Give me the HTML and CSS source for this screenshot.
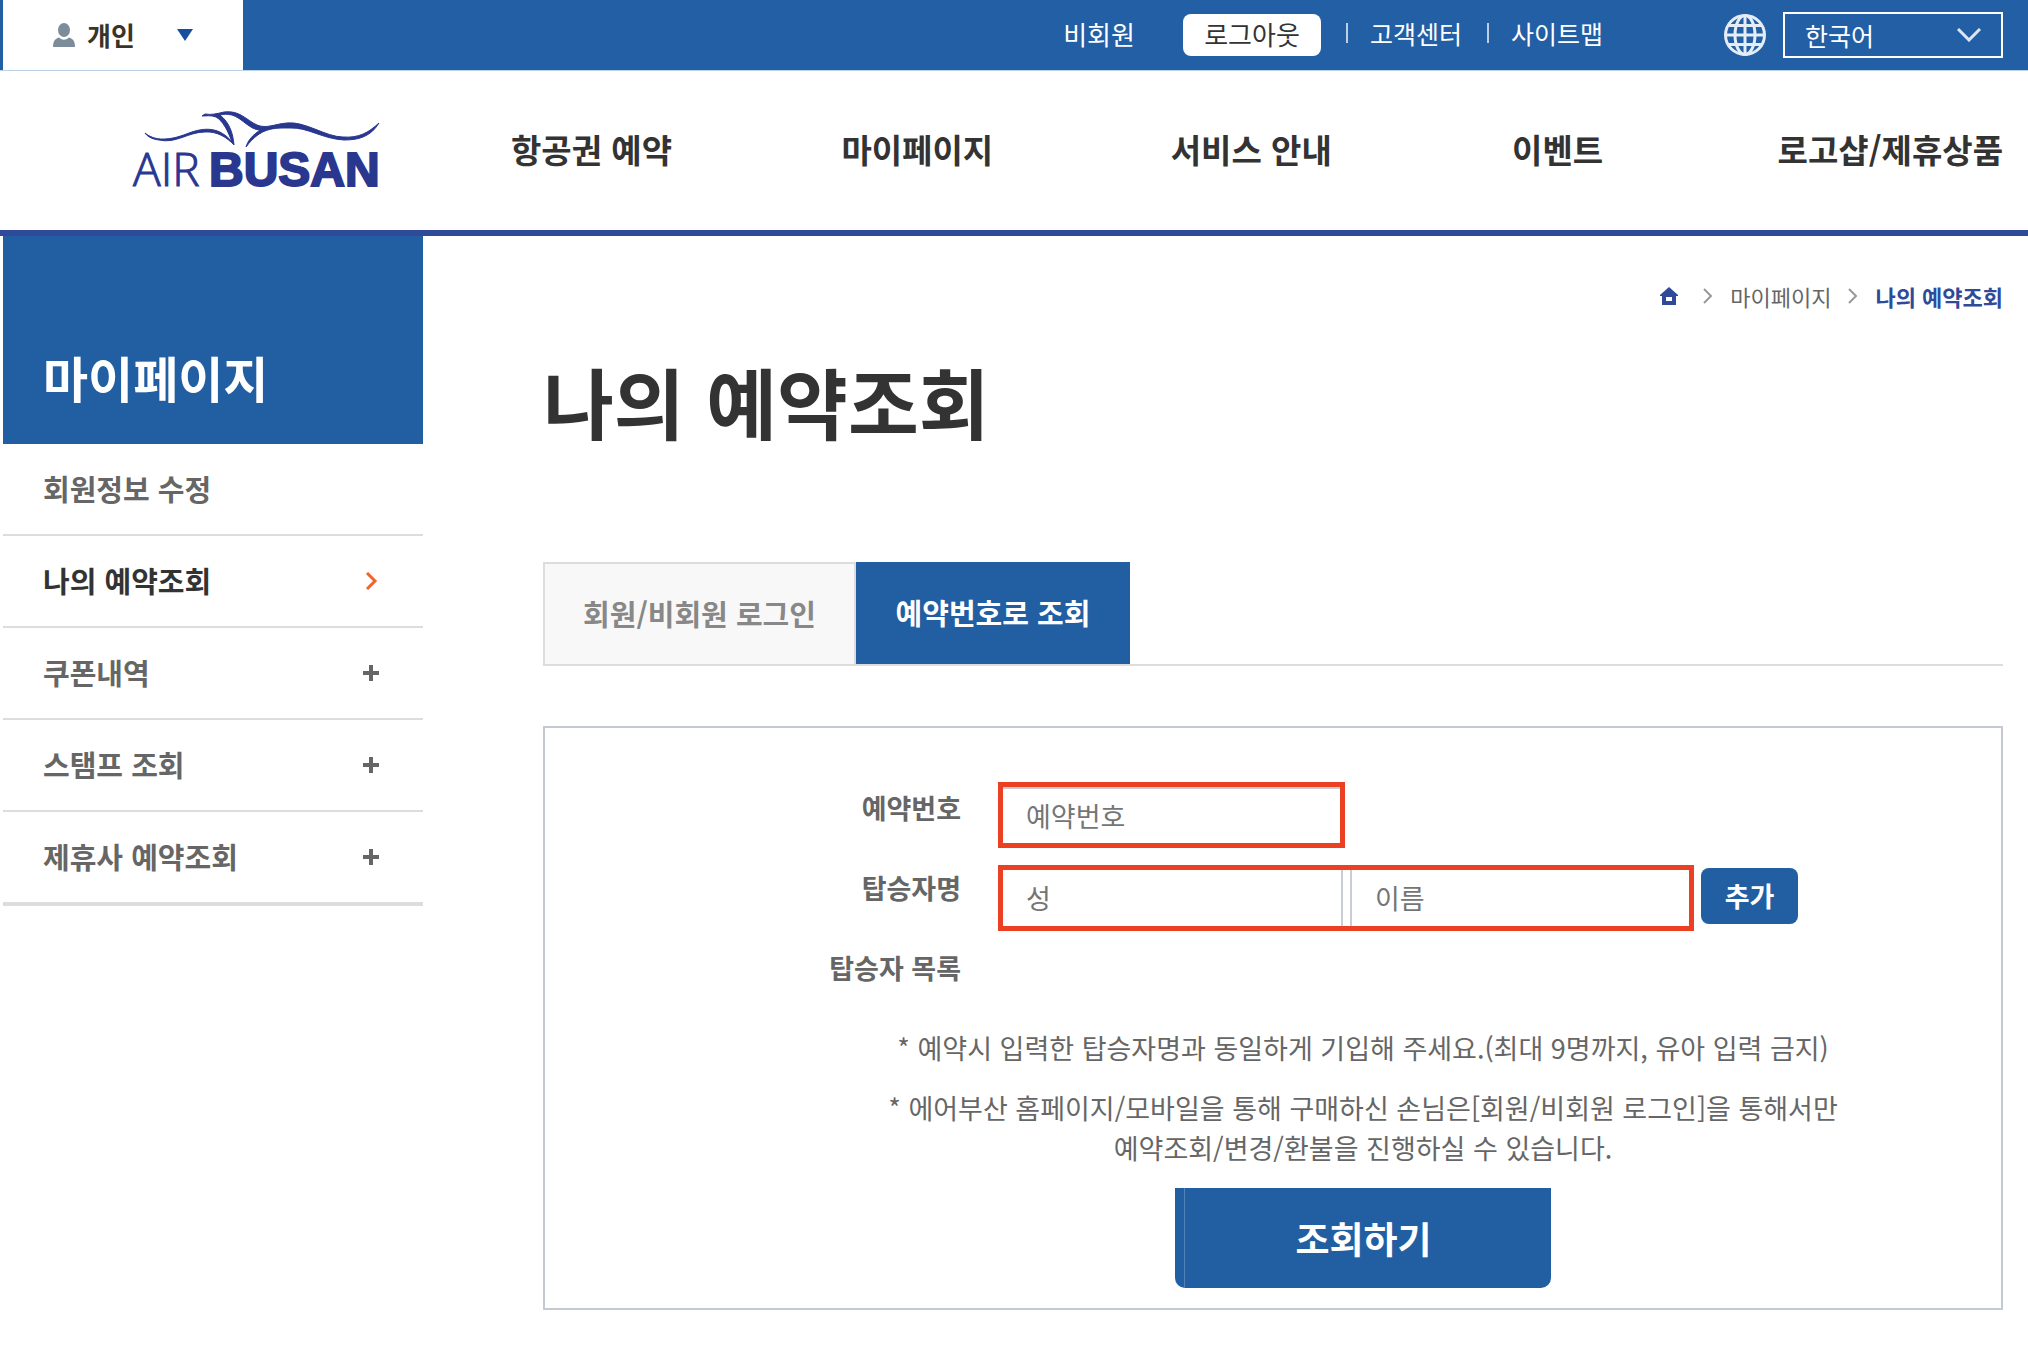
FILE: index.html
```html
<!DOCTYPE html>
<html lang="ko">
<head>
<meta charset="utf-8">
<meta name="viewport" content="width=device-width, initial-scale=1">
<title>나의 예약조회 - AIR BUSAN</title>
<link rel="stylesheet" href="styles.css">
</head>
<body>
<header>
  <div class="topbar">
    <button class="member-type" type="button">
      <svg class="person" width="22" height="24" viewBox="0 0 22 24" aria-hidden="true"><ellipse cx="11" cy="7" rx="6" ry="7"/><path d="M0 24C0 18 2 16 6 14.500Q11 19 16 14.500C20 16 22 18 22 24Z"/></svg>
      <span>개인</span>
      <svg class="caret" width="16" height="12" viewBox="0 0 16 12" aria-hidden="true"><path d="M0 0H16L8 12Z"/></svg>
    </button>
    <div class="utility">
      <span class="guest">비회원</span>
      <button class="logout" type="button">로그아웃</button>
      <ul class="links">
        <li><a href="#">고객센터</a></li>
        <li><a href="#">사이트맵</a></li>
      </ul>
      <svg class="globe" width="42" height="42" viewBox="0 0 42 42" aria-hidden="true"><circle cx="21" cy="21" r="19.500"/><ellipse cx="21" cy="21" rx="10" ry="19.500"/><path d="M21 1V41M1 21H41M5 11.500H37M5 30.500H37"/></svg>
      <div class="language">
        <select aria-label="언어 선택"><option>한국어</option><option>English</option></select>
        <svg width="24" height="14" viewBox="0 0 24 14" aria-hidden="true"><path d="M1 1L12 12L23 1"/></svg>
      </div>
    </div>
  </div>
  <div class="masthead">
    <a class="logo" href="#" aria-label="AIR BUSAN">
      <svg width="260" height="104" viewBox="-4 -14 260 104">
        <path class="wing" d="M12 22C24 32 41 28 56 22C72 16 87 16 99 31C95 20 90 10 83 6C78 4 73 5 69 5L72 3C78 4 83 3 91 1C107-1 113 9 124 14C134 18 141 13 154 12C172 10 193 26 210 26C226 27 235 22 246 12C238 25 227 29 211 29C190 28 174 16 157 17C141 17 128 16 113 36C115 29 120 24 127 19C117 19 109 7 99 4C94 3 91 3 87 4C97 12 100 23 101 34C94 26 83 20 72 21C55 21 43 33 26 29C18 28 14 25 12 22Z"/>
        <text class="air" x="0" y="75">AIR</text>
        <text class="busan" x="76" y="75">BUSAN</text>
      </svg>
    </a>
    <nav class="main-nav" aria-label="주 메뉴">
      <a href="#">항공권 예약</a>
      <a href="#">마이페이지</a>
      <a href="#">서비스 안내</a>
      <a href="#">이벤트</a>
      <a href="#">로고샵/제휴상품</a>
    </nav>
  </div>
</header>
<div class="page">
  <aside class="sidebar">
    <h2>마이페이지</h2>
    <ul>
      <li><a href="#">회원정보 수정</a></li>
      <li><a class="current" href="#" aria-current="page">나의 예약조회<svg class="arrow" width="16" height="18" viewBox="0 0 16 18" aria-hidden="true"><path d="M4 1L12 9L4 17"/></svg></a></li>
      <li><a href="#">쿠폰내역<svg class="plus" width="16" height="16" viewBox="0 0 16 16" aria-hidden="true"><path d="M8 0V16M0 8H16"/></svg></a></li>
      <li><a href="#">스탬프 조회<svg class="plus" width="16" height="16" viewBox="0 0 16 16" aria-hidden="true"><path d="M8 0V16M0 8H16"/></svg></a></li>
      <li><a href="#">제휴사 예약조회<svg class="plus" width="16" height="16" viewBox="0 0 16 16" aria-hidden="true"><path d="M8 0V16M0 8H16"/></svg></a></li>
    </ul>
  </aside>
  <main>
    <nav class="breadcrumb" aria-label="현재 위치">
      <a href="#" aria-label="홈"><svg class="home" width="18" height="18" viewBox="0 0 18 18" aria-hidden="true"><path fill-rule="evenodd" d="M9 0L18 8V9H16V18H2V9H0V8ZM6 10V14H12V10Z"/></svg></a>
      <svg class="sep" width="10" height="16" viewBox="0 0 10 16" aria-hidden="true"><path d="M1 1L8 8L1 15"/></svg>
      <a href="#">마이페이지</a>
      <svg class="sep" width="10" height="16" viewBox="0 0 10 16" aria-hidden="true"><path d="M1 1L8 8L1 15"/></svg>
      <strong>나의 예약조회</strong>
    </nav>
    <h1>나의 예약조회</h1>
    <div class="tabs" role="tablist">
      <button class="tab" type="button" role="tab" aria-selected="false">회원/비회원 로그인</button>
      <button class="tab active" type="button" role="tab" aria-selected="true">예약번호로 조회</button>
    </div>
    <form class="panel">
      <div class="row">
        <label for="booking">예약번호</label>
        <div class="field single"><input id="booking" type="text" placeholder="예약번호"></div>
      </div>
      <div class="row">
        <label for="last-name">탑승자명</label>
        <div class="field double">
          <input id="last-name" type="text" placeholder="성">
          <input type="text" placeholder="이름" aria-label="이름">
        </div>
        <button class="add" type="button">추가</button>
      </div>
      <div class="row">
        <span class="label">탑승자 목록</span>
      </div>
      <div class="notes">
        <p>* 예약시 입력한 탑승자명과 동일하게 기입해 주세요.(최대 9명까지, 유아 입력 금지)</p>
        <p>* 에어부산 홈페이지/모바일을 통해 구매하신 손님은[회원/비회원 로그인]을 통해서만<br>예약조회/변경/환불을 진행하실 수 있습니다.</p>
      </div>
      <button class="submit" type="submit"><span>조회하기</span></button>
    </form>
  </main>
</div>
</body>
</html>
```

FILE: styles.css
```css
* { box-sizing: border-box; }
body {
  margin: 0;
  background: #fff;
  color: #333;
  font-family: "Noto Sans CJK KR", sans-serif;
  font-size: 26px;
  line-height: 40px;
}
a { color: inherit; text-decoration: none; }
ul { margin: 0; padding: 0; list-style: none; }
h1, h2, p { margin: 0; }
button, input, select { font: inherit; border: 0; margin: 0; padding: 0; }
button { cursor: pointer; }
svg { display: block; flex: none; fill: none; }

/* Top bar */
.topbar {
  display: flex;
  justify-content: space-between;
  height: 71px;
  padding: 0 25px 0 3px;
  background: #225fa5;
  border-bottom: 1px solid #bcd0e6;
}
.member-type {
  display: flex;
  align-items: center;
  width: 240px;
  padding-left: 50px;
  background: #fff;
  color: #37342a;
  font-weight: 700;
}
.member-type span { margin: 0 42px 0 12px; }
.person { fill: #7d8c9a; }
.caret { fill: #174f9f; }
.utility {
  display: flex;
  align-items: center;
  height: 70px;
  color: #fff;
}
.guest { padding-bottom: 3px; }
.logout {
  width: 138px;
  height: 42px;
  margin-left: 48px;
  padding-bottom: 3px;
  border-radius: 8px;
  background: #fff;
  color: #333;
  line-height: 39px;
}
.links { display: flex; padding-bottom: 4px; font-size: 25px; }
.links li { display: flex; align-items: center; margin-left: 25px; }
.links li::before {
  content: "";
  width: 2px;
  height: 20px;
  margin-right: 22px;
  background: #bdcfe4;
}
.globe { margin-left: 121px; stroke: #e4edf6; stroke-width: 3; }
.language { position: relative; width: 220px; margin-left: 17px; }
.language select {
  display: block;
  width: 100%;
  height: 46px;
  padding: 0 20px;
  border: 2px solid #fff;
  background: transparent;
  color: #fff;
  font-size: 25px;
  appearance: none;
}
.language svg {
  position: absolute;
  top: 16px;
  right: 22px;
  stroke: #dce7f3;
  stroke-width: 3;
  pointer-events: none;
}

/* Logo and main menu */
.masthead {
  display: flex;
  align-items: center;
  height: 165px;
  padding: 0 25px 3px 129px;
  border-bottom: 6px solid #2f4a99;
}
.logo { width: 382px; }
.wing { fill: #29378f; stroke: #29378f; stroke-width: 1; }
.air {
  fill: #29378f;
  stroke: #29378f;
  stroke-width: 1;
  font: 300 46px "Open Sans", sans-serif;
}
.busan {
  fill: #29378f;
  stroke: #29378f;
  stroke-width: 2;
  font: 700 48px "Liberation Sans", sans-serif;
}
.main-nav {
  flex: 1;
  display: grid;
  grid-template-columns: 331fr 330fr 342fr 266fr 222fr;
  font-size: 33px;
  font-weight: 700;
  white-space: nowrap;
}

/* Side menu */
.page { display: flex; padding: 0 25px 0 3px; }
.sidebar { flex: none; width: 420px; }
.sidebar h2 {
  height: 208px;
  padding: 106px 40px 0;
  background: #225fa2;
  color: #fff;
  font-size: 49px;
  line-height: 70px;
}
.sidebar ul { border-bottom: 2px solid #ddd; }
.sidebar a {
  display: flex;
  align-items: center;
  justify-content: space-between;
  height: 92px;
  padding: 0 44px 3px 40px;
  border-bottom: 2px solid #ddd;
  color: #666;
  font-size: 29px;
  font-weight: 700;
}
.sidebar .current { color: #333; }
.sidebar svg { margin-top: 3px; }
.arrow { stroke: #f1622c; stroke-width: 3; }
.plus { stroke: #666; stroke-width: 4; }

/* Content */
main { flex: 1; min-width: 0; margin-left: 120px; }
.breadcrumb {
  display: flex;
  align-items: center;
  justify-content: flex-end;
  gap: 17px;
  margin-top: 40px;
  color: #666;
  font-size: 22px;
}
.breadcrumb strong { color: #2f4a99; }
.home { margin-right: 8px; fill: #2f4a99; }
.sep { stroke: #999; stroke-width: 2; }
h1 {
  margin-top: 30px;
  font-size: 77px;
  line-height: 110px;
}
.tabs {
  display: flex;
  height: 104px;
  margin-top: 106px;
  border-bottom: 2px solid #ddd;
}
.tab {
  width: 313px;
  padding-bottom: 2px;
  border: 2px solid #ddd;
  border-width: 2px 2px 0;
  background: #f8f8f8;
  color: #888;
  font-size: 29px;
  font-weight: 700;
}
.tab.active {
  width: 274px;
  border: 0;
  background: #225fa2;
  color: #fff;
}
.panel {
  display: flex;
  flex-direction: column;
  margin-top: 60px;
  padding: 54px 0 20px 180px;
  border: 2px solid #c5c9d1;
}
.row { display: flex; align-items: flex-start; height: 66px; }
.row + .row { margin-top: 14px; }
.row label, .row .label {
  width: 236px;
  margin-right: 37px;
  padding-top: 6px;
  color: #666;
  font-size: 27px;
  font-weight: 700;
  text-align: right;
}
.field { display: flex; height: 66px; border: 5px solid #ec4023; }
.single { width: 347px; }
.double { width: 696px; gap: 7px; margin-top: 3px; }
.field input {
  flex: 1;
  min-width: 0;
  padding: 0 23px;
  border: 0 solid #c9ced6;
  background: #fff;
  color: #333;
  font-size: 27px;
  outline: 0;
}
.single input { border-top-width: 2px; }
.double input:first-child { flex: none; width: 340px; border-right-width: 2px; }
.double input:last-child { border-left-width: 2px; }
.field input::placeholder { color: #757575; opacity: 1; }
.add {
  width: 97px;
  height: 56px;
  margin: 6px 0 0 7px;
  border-radius: 8px;
  background: #225fa2;
  color: #fff;
  font-size: 27px;
  font-weight: 700;
}
.notes { margin-top: 20px; color: #666; font-size: 27px; text-align: center; }
.notes p + p { margin-top: 20px; }
.submit {
  align-self: center;
  width: 376px;
  height: 100px;
  margin-top: 20px;
  padding-left: 9px;
  border-radius: 0 0 10px 10px;
  background: #225fa2;
  color: #fff;
  font-size: 37px;
  font-weight: 700;
}
.submit span {
  display: block;
  padding-right: 9px;
  border-left: 1px solid #5283b8;
  line-height: 100px;
}
```
